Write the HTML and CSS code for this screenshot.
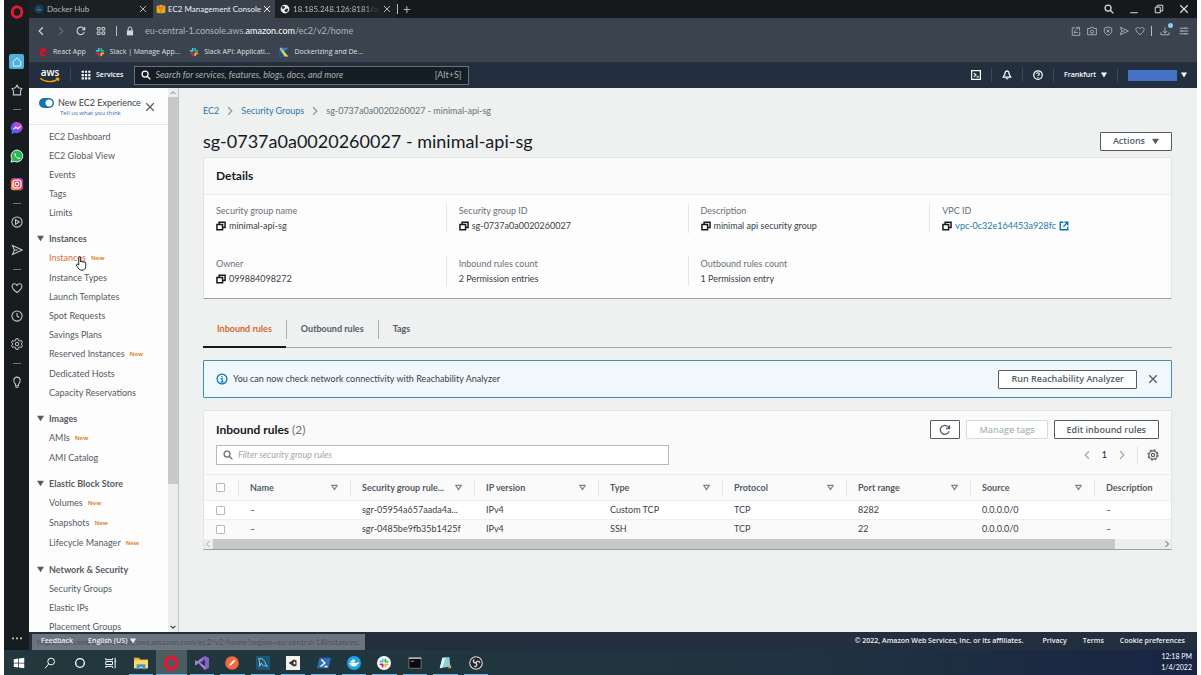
FILE: index.html
```html
<!DOCTYPE html>
<html lang="en">
<head>
<meta charset="utf-8">
<title>EC2 Management Console</title>
<link rel="stylesheet" href="styles.css">
</head>
<body>
<svg class="defs" aria-hidden="true">
  <symbol id="copy" viewBox="0 0 16 16"><path d="M1.500 5.500h9v8.500h-9zM5 5V2h9.500v8.500H11" fill="none" stroke="#16191f" stroke-width="2.400"/></symbol>
  <symbol id="x" viewBox="0 0 16 16"><path d="M2 2l12 12M14 2L2 14" fill="none" stroke="currentColor" stroke-width="2"/></symbol>
  <symbol id="search" viewBox="0 0 16 16"><circle cx="6.500" cy="6.500" r="4.800" fill="none" stroke="currentColor" stroke-width="2"/><path d="M10 10l5 5" stroke="currentColor" stroke-width="2.200"/></symbol>
  <symbol id="down" viewBox="0 0 10 10"><path d="M0 1h10L5 9z" fill="currentColor"/></symbol>
  <symbol id="sort" viewBox="0 0 10 10"><path d="M1.200 2h7.600L5 8z" fill="none" stroke="currentColor" stroke-width="1.700"/></symbol>
  <symbol id="left" viewBox="0 0 10 16"><path d="M8 2L2 8l6 6" fill="none" stroke="currentColor" stroke-width="1.800"/></symbol>
  <symbol id="right" viewBox="0 0 10 16"><path d="M2 2l6 6-6 6" fill="none" stroke="currentColor" stroke-width="1.800"/></symbol>
  <symbol id="heart" viewBox="0 0 16 16"><path d="M8 14C4 11 1.500 8.500 1.500 5.500 1.500 2 6 1 8 4.500 10 1 14.500 2 14.500 5.500 14.500 8.500 12 11 8 14z" fill="none" stroke="currentColor" stroke-width="1.400"/></symbol>
  <symbol id="send" viewBox="0 0 16 16"><path d="M2 2l13 6-13 6 2.500-6zM4.500 8H9" fill="none" stroke="currentColor" stroke-width="1.400"/></symbol>
  <symbol id="reload" viewBox="0 0 16 16"><path d="M13.500 9.500A6 6 0 1 1 12 3.500L14 6M14 1.500V6H9.500" fill="none" stroke="currentColor" stroke-width="1.700"/></symbol>
  <symbol id="opera" viewBox="0 0 16 16"><ellipse cx="8" cy="8" rx="5.500" ry="6" fill="none" stroke="#e31836" stroke-width="3.400"/></symbol>
  <symbol id="slack" viewBox="0 0 16 16"><g stroke-width="2.800" stroke-linecap="round"><path d="M6 2.500V6M2.500 6H6" stroke="#36c5f0"/><path d="M10 2.500V6M10 6h3.500" stroke="#2eb67d"/><path d="M10 10v3.500M10 10h3.500" stroke="#ecb22e"/><path d="M6 10v3.500M2.500 10H6" stroke="#e01e5a"/></g></symbol>
</svg>

<div class="screen">
  <div class="browser">
    <aside class="dock">
      <svg class="ic14 logo"><use href="#opera"/></svg>
      <span class="dock-home"><svg class="ic10" viewBox="0 0 16 16"><path d="M2 7l6-5.500L14 7v7.500H2z" fill="none" stroke="#e4f6ff" stroke-width="1.600"/></svg></span>
      <svg class="ic12" viewBox="0 0 16 16"><path d="M8 1.500l2 3.500 4.500 1-2 3.500.4 5H3.100l.4-5-2-3.500L6 5z" fill="none" stroke="currentColor" stroke-width="1.400"/></svg>
      <i class="dash"></i>
      <svg class="ic14" viewBox="0 0 16 16"><defs><linearGradient id="mg" x1="0" y1="1" x2="1" y2="0"><stop offset="0" stop-color="#1685ff"/><stop offset=".5" stop-color="#8a3cff"/><stop offset="1" stop-color="#ff5f88"/></linearGradient></defs><path d="M8 1a6.800 6.500 0 1 1-3 12.500L2 15V11A6.800 6.500 0 0 1 8 1z" fill="url(#mg)"/><path d="M3.500 9.500L6.500 6l2.300 2 3.500-2-3 3.500L7 8z" fill="#fff" stroke="#fff" stroke-width=".6"/></svg>
      <svg class="ic14" viewBox="0 0 16 16"><path d="M8 1.200a6.800 6.800 0 1 1-3.200 12.900L1.200 15l1-3.600A6.800 6.800 0 0 1 8 1.200z" fill="#25b84c" stroke="#fff" stroke-width="1"/><path d="M5.500 4.500c-1 1-.5 3 1.500 5s4 2.500 5 1.200l-1.600-1.200-1 .8C8.300 10 7 8.800 6.500 7.500l.8-.9z" fill="#fff"/></svg>
      <svg class="ic14" viewBox="0 0 16 16"><defs><linearGradient id="ig" x1="0" y1="1" x2="1" y2="0"><stop offset="0" stop-color="#fdb94a"/><stop offset=".5" stop-color="#e8334f"/><stop offset="1" stop-color="#8a35c8"/></linearGradient></defs><rect x="1" y="1" width="14" height="14" rx="3" fill="url(#ig)"/><rect x="3.500" y="3.500" width="9" height="9" rx="2.500" fill="none" stroke="#fff" stroke-width="1.300"/><circle cx="8" cy="8" r="2.200" fill="none" stroke="#fff" stroke-width="1.300"/></svg>
      <i class="dash"></i>
      <svg class="ic12" viewBox="0 0 16 16"><circle cx="8" cy="8" r="6.800" fill="none" stroke="currentColor" stroke-width="1.400"/><path d="M6 5l5 3-5 3z" fill="none" stroke="currentColor" stroke-width="1.400"/></svg>
      <svg class="ic12"><use href="#send"/></svg>
      <i class="dash"></i>
      <svg class="ic12"><use href="#heart"/></svg>
      <svg class="ic12" viewBox="0 0 16 16"><circle cx="8" cy="8" r="6.800" fill="none" stroke="currentColor" stroke-width="1.400"/><path d="M8 4v4l3 2" fill="none" stroke="currentColor" stroke-width="1.400"/></svg>
      <svg class="ic12" viewBox="0 0 16 16"><g fill="none" stroke="currentColor" stroke-width="1.300"><path d="M6.500 1h3l.4 2.200 2 1 2-.8 1.300 2.600L13.500 8l1.700 2-1.300 2.600-2-.8-2 1-.4 2.200h-3l-.4-2.200-2-1-2 .8L.8 10l1.700-2L.8 6l1.300-2.600 2 .8 2-1z"/><circle cx="8" cy="8" r="2.400"/></g></svg>
      <i class="dash"></i>
      <svg class="ic12" viewBox="0 0 16 16"><path d="M6 11C2 7.500 3.500 1.500 8 1.500S14 7.500 10 11v2H6zM6 15h4" fill="none" stroke="currentColor" stroke-width="1.400"/></svg>
      <svg class="ic10 more" viewBox="0 0 16 16"><path d="M0 7h3v3H0zM6.500 7h3v3h-3zM13 7h3v3h-3z" fill="currentColor"/></svg>
    </aside>

    <div class="window">
      <div class="tabbar">
        <div class="tab"><svg class="ic10" viewBox="0 0 16 16"><circle cx="8" cy="8" r="7.500" fill="#183b50"/><path d="M3 8h10c-1 4-8 5-10 0zM5 5h4v2H5z" fill="#37677f"/></svg><span>Docker Hub</span><svg class="ic8"><use href="#x"/></svg></div>
        <div class="tab tab-on"><svg class="ic10" viewBox="0 0 16 16"><path d="M1 3l7-2 7 2v11l-7 1-7-1z" fill="#f2a51d"/><path d="M5 2v5l3-1 3 1V2M8 7v8" fill="none" stroke="#a86708"/></svg><span>EC2 Management Console</span><svg class="ic8"><use href="#x"/></svg></div>
        <div class="tab"><svg class="ic10" viewBox="0 0 16 16"><circle cx="8" cy="8" r="7" fill="#e9ecee"/><path d="M3 4l4-1 1 3-3 2-2-1zM9 8l4-1-1 5-3 1-2-3z" fill="#252b30"/></svg><span class="fade">18.185.248.126:8181/api/ge</span><svg class="ic8"><use href="#x"/></svg></div>
        <i class="vbar"></i><span class="plus">+</span>
        <div class="winctl">
          <svg class="ic10"><use href="#search"/></svg>
          <svg class="ic10" viewBox="0 0 16 16"><path d="M2 14h12" stroke="currentColor" stroke-width="1.600"/></svg>
          <svg class="ic10" viewBox="0 0 16 16"><path d="M2 5h8v9H2zM5 5V2h9v9h-4" fill="none" stroke="currentColor" stroke-width="1.600"/></svg>
          <svg class="ic10"><use href="#x"/></svg>
        </div>
      </div>
      <div class="address">
        <svg class="ic10 lit"><use href="#left"/></svg>
        <svg class="ic10 off"><use href="#right"/></svg>
        <svg class="ic10 lit"><use href="#reload"/></svg>
        <svg class="ic10 lit" viewBox="0 0 16 16"><path d="M2 2.500h4.500v4H2zM9.500 2.500H14v4H9.500zM2 9.500h4.500v4H2zM9.500 9.500H14v4H9.500z" fill="none" stroke="currentColor" stroke-width="1.500"/></svg>
        <i class="vbar"></i>
        <svg class="ic10 lock" viewBox="0 0 16 16"><path d="M3 7h10v8H3z" fill="currentColor"/><path d="M5 7V4.500a3 3 0 0 1 6 0V7" fill="none" stroke="currentColor" stroke-width="1.600"/></svg>
        <span class="url">eu-central-1.console.aws.<b>amazon.com</b>/ec2/v2/home</span>
        <div class="actions">
          <svg class="ic10" viewBox="0 0 16 16"><path d="M7 3H2v12h12V9M5 12c0-4 2-6 7-9M8 2h5.500v5.500M6 11l5-1" fill="none" stroke="currentColor" stroke-width="1.400"/></svg>
          <svg class="ic10" viewBox="0 0 16 16"><path d="M1 4h4l1-2h4l1 2h4v10H1z" fill="none" stroke="currentColor" stroke-width="1.400"/><circle cx="8" cy="9" r="2.600" fill="none" stroke="currentColor" stroke-width="1.400"/></svg>
          <svg class="ic10" viewBox="0 0 16 16"><path d="M8 1.500l6 2v5c0 3-3 5-6 6-3-1-6-3-6-6v-5zM5.500 5.500l5 5M10.500 5.500l-5 5" fill="none" stroke="currentColor" stroke-width="1.400"/></svg>
          <svg class="ic10"><use href="#send"/></svg>
          <svg class="ic10"><use href="#heart"/></svg>
          <i class="vbar"></i>
          <span class="dl"><svg class="ic10" viewBox="0 0 16 16"><path d="M8 2v9M4.500 8L8 11.500 11.500 8M1.500 10v4h13v-4" fill="none" stroke="currentColor" stroke-width="1.500"/></svg></span>
          <svg class="ic10" viewBox="0 0 16 16"><path d="M1 3.500h14M1 8h14M1 12.500h14M10 2v3M5 6.500v3M10 11v3" stroke="currentColor" stroke-width="1.500"/></svg>
        </div>
      </div>
      <nav class="bookmarks">
        <a href="#"><svg class="ic10" viewBox="0 0 16 16"><path d="M2 8c2-9 13-8 12 0H7c0 4 4 4 7 3-3 6-12 5-12-3z" fill="#d0142c"/></svg>React App</a>
        <a href="#"><svg class="ic10"><use href="#slack"/></svg>Slack | Manage App...</a>
        <a href="#"><svg class="ic10"><use href="#slack"/></svg>Slack API: Applicati...</a>
        <a href="#"><svg class="ic10" viewBox="0 0 16 16"><path d="M1 1h14L8 8l7 7H1z" fill="#2d7fd0"/><path d="M1 1h2l12 14H9z" fill="#f4d53a"/><path d="M1 6l8 9H1z" fill="#16508f"/></svg>Dockerizing and De...</a>
      </nav>

      <header class="aws">
        <svg class="aws-logo" viewBox="0 -6 40 32"><text x="20" y="12" text-anchor="middle" class="aws-word">aws</text><path d="M2 16c10 8 24 8 33 1M30.500 16c5-1 7-1 4.500 5" fill="none" stroke="#f90" stroke-width="2.500"/></svg>
        <i class="hsep"></i>
        <button class="services"><svg class="ic10" viewBox="0 0 16 16"><path d="M1 1h3.500v3.500H1zM6.300 1h3.500v3.500H6.300zM11.600 1h3.500v3.500h-3.500zM1 6.300h3.500v3.500H1zM6.300 6.300h3.500v3.500H6.300zM11.600 6.300h3.500v3.500h-3.500zM1 11.600h3.500v3.500H1zM6.300 11.600h3.500v3.500H6.300zM11.600 11.600h3.500v3.500h-3.500z" fill="#fff"/></svg>Services</button>
        <label class="global-search"><svg class="ic10"><use href="#search"/></svg><input type="text" aria-label="Search AWS" placeholder="Search for services, features, blogs, docs, and more"><span>[Alt+S]</span></label>
        <div class="aws-right">
          <svg class="ic10" viewBox="0 0 16 16"><path d="M1 1h14v14H1zM4.500 5l3.500 3-3.500 3M9 11h3.500" fill="none" stroke="currentColor" stroke-width="1.900"/></svg>
          <i class="hsep"></i>
          <svg class="ic10" viewBox="0 0 16 16"><path d="M8 1.500C5 2 4.500 5 4.500 7L2 11.500h12L11.500 7c0-2-.5-5-3.500-5.500zM6 14h4" fill="none" stroke="currentColor" stroke-width="1.900"/></svg>
          <i class="hsep"></i>
          <svg class="ic10" viewBox="0 0 16 16"><circle cx="8" cy="8" r="6.800" fill="none" stroke="currentColor" stroke-width="2"/><path d="M5.700 6.500c0-3 4.600-3 4.600 0C10.300 8 8 8 8 9.600M8 11v1.700" fill="none" stroke="currentColor" stroke-width="1.700"/></svg>
          <i class="hsep"></i>
          <button class="region">Frankfurt <svg class="ic6"><use href="#down"/></svg></button>
          <i class="hsep"></i>
          <button class="account" aria-label="Account"><i></i><svg class="ic6"><use href="#down"/></svg></button>
        </div>
      </header>

      <div class="console">
        <div class="side">
          <nav class="sidenav">
            <div class="side-head">
              <label class="switch"><input type="checkbox" checked aria-label="New EC2 Experience"><i></i></label>
              <div class="side-title"><span>New EC2 Experience</span><a href="#">Tell us what you think</a></div>
              <button class="bare" aria-label="Close"><svg class="ic10"><use href="#x"/></svg></button>
            </div>
            <div class="links">
              <a href="#">EC2 Dashboard</a><a href="#">EC2 Global View</a><a href="#">Events</a><a href="#">Tags</a><a href="#">Limits</a>
              <h2><svg class="ic7"><use href="#down"/></svg>Instances</h2>
              <a href="#" class="new current">Instances<em>New</em><svg class="hand" viewBox="0 0 16 20"><path d="M5 12V2.500c0-2 2.500-2 2.500 0V8c0-1.500 2.300-1.500 2.300.3 0-1.500 2.300-1.300 2.300.5 0-1.300 2.200-1.200 2.200.5V14c0 3-2 5-5 5-3.500 0-4.500-2-7.500-6.500C1 11 3 10 5 12z" fill="#fff" stroke="#111" stroke-width="1.200"/></svg></a>
              <a href="#">Instance Types</a><a href="#">Launch Templates</a><a href="#">Spot Requests</a><a href="#">Savings Plans</a><a href="#" class="new">Reserved Instances<em>New</em></a><a href="#">Dedicated Hosts</a><a href="#">Capacity Reservations</a>
              <h2><svg class="ic7"><use href="#down"/></svg>Images</h2>
              <a href="#" class="new">AMIs<em>New</em></a><a href="#">AMI Catalog</a>
              <h2><svg class="ic7"><use href="#down"/></svg>Elastic Block Store</h2>
              <a href="#" class="new">Volumes<em>New</em></a><a href="#" class="new">Snapshots<em>New</em></a><a href="#" class="new">Lifecycle Manager<em>New</em></a>
              <h2><svg class="ic7"><use href="#down"/></svg>Network &amp; Security</h2>
              <a href="#">Security Groups</a><a href="#">Elastic IPs</a><a href="#">Placement Groups</a>
            </div>
          </nav>
          <div class="vscroll"><svg class="ic6 faint" viewBox="0 0 10 10"><path d="M1 7l4-4 4 4" fill="none" stroke="currentColor" stroke-width="2"/></svg><i></i><svg class="ic6" viewBox="0 0 10 10"><path d="M1 3l4 4 4-4" fill="none" stroke="currentColor" stroke-width="2"/></svg></div>
        </div>

        <main class="main">
          <nav class="crumbs"><a href="#">EC2</a><svg class="ic10"><use href="#right"/></svg><a href="#">Security Groups</a><svg class="ic10"><use href="#right"/></svg><span>sg-0737a0a0020260027 - minimal-api-sg</span></nav>
          <div class="title"><h1>sg-0737a0a0020260027 - minimal-api-sg</h1><button class="btn btn-menu">Actions <svg class="ic7"><use href="#down"/></svg></button></div>

          <section class="card">
            <h2 class="card-head">Details</h2>
            <dl class="fields">
              <div><dt>Security group name</dt><dd><svg class="ic10"><use href="#copy"/></svg>minimal-api-sg</dd></div>
              <div><dt>Security group ID</dt><dd><svg class="ic10"><use href="#copy"/></svg>sg-0737a0a0020260027</dd></div>
              <div><dt>Description</dt><dd><svg class="ic10"><use href="#copy"/></svg>minimal api security group</dd></div>
              <div><dt>VPC ID</dt><dd><svg class="ic10"><use href="#copy"/></svg><a href="#">vpc-0c32e164453a928fc</a><svg class="ic10 ext" viewBox="0 0 16 16"><path d="M7 2H2v12h12V9M9 2h5v5M14 2L7 9" fill="none" stroke="#0073bb" stroke-width="2.200"/></svg></dd></div>
              <div><dt>Owner</dt><dd><svg class="ic10"><use href="#copy"/></svg>099884098272</dd></div>
              <div><dt>Inbound rules count</dt><dd>2 Permission entries</dd></div>
              <div><dt>Outbound rules count</dt><dd>1 Permission entry</dd></div>
            </dl>
          </section>

          <div class="tabs" role="tablist">
            <button role="tab" aria-selected="true">Inbound rules</button><button role="tab" aria-selected="false">Outbound rules</button><button role="tab" aria-selected="false">Tags</button>
          </div>

          <div class="notice">
            <svg class="ic12" viewBox="0 0 16 16"><circle cx="8" cy="8" r="6.500" fill="none" stroke="#0073bb" stroke-width="1.700"/><path d="M6 7.300h2.200V12M6 12h4.500M7 4.800h1.700" fill="none" stroke="#0073bb" stroke-width="1.600"/></svg>
            <p>You can now check network connectivity with Reachability Analyzer</p>
            <button class="btn">Run Reachability Analyzer</button>
            <button class="bare" aria-label="Dismiss"><svg class="ic10"><use href="#x"/></svg></button>
          </div>

          <section class="card rules">
            <div class="rules-head"><h2>Inbound rules <span>(2)</span></h2>
              <button class="btn btn-icon" aria-label="Refresh"><svg class="ic12"><use href="#reload"/></svg></button>
              <button class="btn" disabled>Manage tags</button>
              <button class="btn">Edit inbound rules</button></div>
            <div class="filter-row">
              <label class="filter"><svg class="ic10"><use href="#search"/></svg><input type="text" aria-label="Filter security group rules" placeholder="Filter security group rules"></label>
              <div class="pager"><button class="bare faint" aria-label="Previous"><svg class="ic10"><use href="#left"/></svg></button><span>1</span><button class="bare faint" aria-label="Next"><svg class="ic10"><use href="#right"/></svg></button><button class="bare gear" aria-label="Preferences"><svg class="ic12" viewBox="0 0 16 16"><circle cx="8" cy="8" r="5.500" fill="none" stroke="currentColor" stroke-width="1.600"/><circle cx="8" cy="8" r="6.800" fill="none" stroke="currentColor" stroke-width="1.500" stroke-dasharray="2.700 2.640"/><circle cx="8" cy="8" r="2.200" fill="none" stroke="currentColor" stroke-width="1.500"/></svg></button></div>
            </div>
            <table>
              <colgroup><col class="c-check"><col class="c-name"><col class="c"><col class="c"><col class="c"><col class="c"><col class="c"><col class="c"><col></colgroup>
              <thead><tr><th><input type="checkbox" aria-label="Select all"></th>
                <th><div>Name<svg class="ic7"><use href="#sort"/></svg></div></th><th><div>Security group rule...<svg class="ic7"><use href="#sort"/></svg></div></th><th><div>IP version<svg class="ic7"><use href="#sort"/></svg></div></th><th><div>Type<svg class="ic7"><use href="#sort"/></svg></div></th><th><div>Protocol<svg class="ic7"><use href="#sort"/></svg></div></th><th><div>Port range<svg class="ic7"><use href="#sort"/></svg></div></th><th><div>Source<svg class="ic7"><use href="#sort"/></svg></div></th><th><div>Description</div></th></tr></thead>
              <tbody>
                <tr><td><input type="checkbox" aria-label="Select rule 1"></td><td>–</td><td>sgr-05954a657aada4a...</td><td>IPv4</td><td>Custom TCP</td><td>TCP</td><td>8282</td><td>0.0.0.0/0</td><td>–</td></tr>
                <tr><td><input type="checkbox" aria-label="Select rule 2"></td><td>–</td><td>sgr-0485be9fb35b1425f</td><td>IPv4</td><td>SSH</td><td>TCP</td><td>22</td><td>0.0.0.0/0</td><td>–</td></tr>
              </tbody>
            </table>
            <div class="hscroll"><svg class="ic8 faint"><use href="#left"/></svg><span><i></i></span><svg class="ic8"><use href="#right"/></svg></div>
          </section>
        </main>
      </div>

      <footer class="foot">
        <a href="#" class="top">Feedback</a><button class="top">English (US) <svg class="ic6"><use href="#down"/></svg></button>
        <div class="legal"><span>© 2022, Amazon Web Services, Inc. or its affiliates.</span><a href="#">Privacy</a><a href="#">Terms</a><a href="#">Cookie preferences</a></div>
        <div class="status">https://eu-central-1.console.aws.amazon.com/ec2/v2/home?region=eu-central-1#Instances:</div>
      </footer>
    </div>
  </div>

  <div class="taskbar">
    <div class="apps">
      <span><svg class="ic12" viewBox="0 0 16 16"><path d="M1 3l6-1v5.500H1zM8 2l7-1v6.500H8zM1 8.500h6V14l-6-1zM8 8.500h7V15l-7-1z" fill="#fff"/></svg></span>
      <span><svg class="ic12" viewBox="0 0 16 16"><circle cx="9.500" cy="6" r="4.500" fill="none" stroke="#fff" stroke-width="1.300"/><path d="M6 9.500L1.500 15" stroke="#fff" stroke-width="1.300"/></svg></span>
      <span><svg class="ic12" viewBox="0 0 16 16"><circle cx="8" cy="8" r="5.800" fill="none" stroke="#fff" stroke-width="1.800"/></svg></span>
      <span><svg class="ic12" viewBox="0 0 16 16"><path d="M1 1.500v2h9v-2M1 14.500v-2h9v2M1 6h9v4H1zM13.500 1v14M13 5.500h2" fill="none" stroke="#fff" stroke-width="1.300"/></svg></span>
      <span class="run"><svg class="ic14" viewBox="0 0 16 16"><path d="M0 2h6l1 2h9v10H0z" fill="#e8b83c"/><path d="M0 5h16v9H0z" fill="#ffda6b"/><path d="M3 15V9.500h10V15h-3v-2.500H6V15z" fill="#3f9ad6"/></svg></span>
      <span class="run active"><svg class="ic16"><use href="#opera"/></svg></span>
      <span class="run"><svg class="ic16" viewBox="0 0 16 16"><path d="M11 1l4 2v10l-4 2-8-8-2 1.500V5.500L3 7z" fill="#8661c5"/><path d="M11 4.500L6.500 8 11 11.500z" fill="#22383d"/><path d="M11 1L3 9.500 1 10.500V5.500L3 6l8 9V11.500L3.500 6z" fill="#a684e4"/></svg></span>
      <span class="run"><svg class="ic14" viewBox="0 0 16 16"><circle cx="8" cy="8" r="7.800" fill="#f2683c"/><path d="M4 12l2-3.500 4.500-4.500 1.700 1.500L7.500 10z" fill="#fff"/></svg></span>
      <span class="run"><svg class="ic14" viewBox="0 0 16 16"><path d="M0 0h16v16H0z" fill="#1b5877"/><path d="M3 3c4-1 7 2 8 6l2 3-3-1c-3 1-3-2-4-3L4 12V6z" fill="none" stroke="#a7c7d3"/></svg></span>
      <span class="run"><svg class="ic14" viewBox="0 0 16 16"><path d="M0 0h16v16H0z" fill="#f3f3ee"/><path d="M3 8l6-4 3 1v6l-3 1z" fill="#333"/><path d="M8 8l2-2 1 2-1 2z" fill="#f3f3ee"/></svg></span>
      <span class="run"><svg class="ic14" viewBox="0 0 16 16"><path d="M3 2h13l-3 12H0z" fill="#2e6cc0"/><path d="M5 4l4 4-5 4M8.500 12H12" fill="none" stroke="#fff" stroke-width="1.500"/></svg></span>
      <span class="run"><svg class="ic14" viewBox="0 0 16 16"><circle cx="8" cy="8" r="8" fill="#1ba6e8"/><path d="M2.500 8h9l1-1.500L14 8c-1 1-1.500 1-2 1-1 4-8 4.500-9.500-1zM4 5.500h5v2H4zM6 4h3v1.500H6z" fill="#fff"/></svg></span>
      <span class="run"><svg class="ic14" viewBox="0 0 16 16"><circle cx="8" cy="8" r="8" fill="#fff"/><use href="#slack" x="2" y="2" width="12" height="12"/></svg></span>
      <span class="run"><svg class="ic14" viewBox="0 0 16 16"><path d="M1 2h14v12H1z" fill="#0a0a0a" stroke="#777d80"/><path d="M1 2.500h14" stroke="#ccc" stroke-width="1.500"/><path d="M3 6h4" stroke="#aaa"/></svg></span>
      <span class="run"><svg class="ic14" viewBox="0 0 16 16"><path d="M5 2l8-1 1 11-12 2z" fill="#8fd0d5"/><path d="M5 2h4L5 13l-3 1z" fill="#d9f2f1"/><path d="M11 14l4-4v4z" fill="#ddb23e"/></svg></span>
      <span class="run"><svg class="ic14" viewBox="0 0 16 16"><circle cx="8" cy="8" r="7.200" fill="#24262b" stroke="#ddd" stroke-width="1.200"/><path d="M8 8c-3 0-4-2-2-4M8 8c1-3 4-2.500 4.500 0M8 8c2 2 .5 4.500-2 4" fill="none" stroke="#ddd" stroke-width="1.500"/></svg></span>
    </div>
    <div class="clock"><span>12:18 PM</span><span>1/4/2022</span></div>
  </div>
</div>
</body>
</html>
```
FILE: styles.css
```css
* { box-sizing: border-box; }
body { margin: 0; background: #fff; font: 9px/12px Lato, "Open Sans", sans-serif; color: #3a4048; }
h1, h2, p, dl, dd { margin: 0; }
a { color: inherit; text-decoration: none; }
button, input { font: inherit; color: inherit; margin: 0; }
button { background: none; border: 0; padding: 0; display: flex; align-items: center; white-space: nowrap; }
svg { flex: none; display: block; }
.defs { position: absolute; width: 0; height: 0; }
.ic6 { width: 6px; height: 6px; }
.ic7 { width: 7px; height: 7px; }
.ic8 { width: 8px; height: 8px; }
.ic10 { width: 10px; height: 10px; }
.ic12 { width: 12px; height: 12px; }
.ic14 { width: 14px; height: 14px; }
.ic16 { width: 16px; height: 16px; }
.bare { color: #545b64; }
.faint { color: #a0a6aa; }

.screen { height: 100vh; margin: 0 4px; display: flex; flex-direction: column; overflow: hidden; }
.browser { flex: 1; min-height: 0; display: flex; }

.dock { width: 25px; background: #171c1f; color: #c6cbcd; display: flex; flex-direction: column; align-items: center; padding-top: 5px; gap: 14px; }
.dock .logo { margin-bottom: 21px; }
.dock-home { width: 15px; height: 15px; border-radius: 2px; background: #4fb0dc; display: grid; place-items: center; }
.dash { width: 8px; height: 1px; margin: -2px 0 -3px; background: #70777a; }
.dock .ic12 { margin: 1px 0; }
.dock .more { margin: auto 0 7px; }

.window { flex: 1; min-width: 0; display: flex; flex-direction: column; }
.tabbar { height: 18px; background: #15191b; color: #b4babe; display: flex; align-items: center; font-size: 8px; }
.tab { width: 122px; height: 18px; display: flex; align-items: center; gap: 3px; padding: 0 6px 0 5px; background: #1b2023; white-space: nowrap; }
.tab span { flex: 1; min-width: 0; overflow: hidden; }
.tab:first-child { width: 124px; }
.tab-on { background: #3a434e; color: #eef0f2; padding: 0 4px 0 3px; gap: 2px; }
.fade { -webkit-mask-image: linear-gradient(90deg, #000 80%, transparent); mask-image: linear-gradient(90deg, #000 80%, transparent); }
.vbar { width: 1px; height: 10px; background: #b7bdc1; }
.plus { margin-left: 5px; font-size: 13px; }
.winctl { margin-left: auto; display: flex; gap: 15px; padding-right: 8px; color: #d8dbdd; }
.address { height: 25px; background: #3a434e; display: flex; align-items: center; gap: 10px; padding: 0 8px 0 7px; color: #aeb6bd; }
.lit, .lock { color: #d2d7db; }
.lock { margin-left: -2px; }
.url { font-size: 9px; white-space: nowrap; }
.off { color: #66707a; }
.url b { font-weight: 400; color: #fff; }
.actions { margin-left: auto; display: flex; align-items: center; gap: 6px; }
.dl { position: relative; padding: 0 3px 0 2px; }
.dl::after { content: ""; position: absolute; right: 0; top: -3px; width: 5px; height: 5px; border-radius: 50%; background: #7ed0ee; }
.bookmarks { height: 19px; background: #3a434e; color: #dde1e4; display: flex; align-items: center; gap: 9px; padding: 0 9px 2px; font-family: "Open Sans", sans-serif; font-size: 7px; }
.bookmarks a { display: flex; align-items: center; gap: 5px; white-space: nowrap; }

.aws { height: 26px; background: #232f3e; color: #fff; display: flex; align-items: center; padding: 0 10px; font-size: 8px; }
.aws-logo { width: 22px; height: 18px; }
.aws-word { font: 600 18px "Open Sans", sans-serif; fill: #fff; }
.hsep { width: 1px; height: 14px; background: #3d4855; }
.aws > .hsep { margin: 0 10px 0 9px; }
.services { gap: 5px; font: 600 7px/12px "Open Sans", sans-serif; }
.global-search { margin-left: 10px; width: 335px; height: 19px; border: 1px solid #687078; background: #161d25; display: flex; align-items: center; gap: 5px; padding: 0 6px; font-size: 9px; }
.global-search input { flex: 1; min-width: 0; border: 0; padding: 0; background: none; outline: 0; }
.global-search input::placeholder { color: #a7b0b7; opacity: 1; font-style: italic; }
.global-search span { color: #a7b0b7; }
.aws-right { margin-left: auto; display: flex; align-items: center; gap: 10px; }
.region { gap: 5px; font: 600 7px/12px "Open Sans", sans-serif; }
.account { gap: 4px; }
.account i { width: 49px; height: 11px; background: #4472c4; }

.console { flex: 1; min-height: 0; display: flex; background: #eff1f1; }
.side { width: 150px; display: flex; background: #fdfdfd; border-right: 1px solid #c4c6c8; overflow: hidden; }
.sidenav { flex: 1; overflow: hidden; }
.side-head { height: 37px; display: flex; align-items: center; gap: 4px; padding: 2px 13px 0 10px; border-bottom: 1px solid #e6e8e8; }
.switch { align-self: flex-start; padding-top: 8px; }
.switch input { position: absolute; opacity: 0; }
.switch i { display: block; width: 15px; height: 10px; border-radius: 5px; background: radial-gradient(circle at 10px 5px, #fff 3px, #1173b5 4px); }
.side-title { display: flex; flex-direction: column; white-space: nowrap; flex: 1; min-width: 0; }
.side-title span { line-height: 11px; }
.side-title a { font-family: "Open Sans", sans-serif; font-size: 6px; line-height: 10px; color: #3867b1; padding-left: 2px; }
.links { padding-top: 2px; color: #545b64; }
.links a { display: flex; align-items: center; height: 19px; padding-left: 20px; white-space: nowrap; }
.links .new { height: 20px; }
.links em { margin-left: 5px; font-family: "Open Sans", sans-serif; font-size: 6px; font-style: normal; font-weight: 700; color: #e08a35; }
.links .current { color: #d5703a; position: relative; }
.hand { position: absolute; left: 46px; top: 8px; width: 12px; height: 15px; }
.links h2 { display: flex; align-items: center; gap: 5px; height: 19px; margin-top: 7px; padding-left: 8px; font-size: 9px; font-weight: 700; }
.vscroll { width: 10px; background: #ededed; display: flex; flex-direction: column; align-items: center; padding: 2px 0; gap: 1px; }
.vscroll i { width: 100%; height: 387px; margin-bottom: auto; background: #c8c8c8; }

.main { flex: 1; min-width: 0; padding: 16px 25px 0 24px; }
.crumbs { display: flex; align-items: center; gap: 6px; height: 13px; color: #687078; }
.crumbs a, .fields a { color: #2577a8; }
.crumbs svg { color: #8b9397; }
.title { display: flex; align-items: center; justify-content: space-between; height: 40px; padding-top: 12px; padding-bottom: 4px; }
h1 { font-size: 18px; line-height: 24px; font-weight: 400; color: #16191f; }
.btn { height: 19px; padding: 0 12px; border: 1px solid #545b64; border-radius: 1px; background: #fff; font-family: "Open Sans", sans-serif; font-weight: 600; color: #545b64; }
.btn:disabled { border-color: #d5dbdb; color: #aab7b8; }
.btn-menu { gap: 7px; }
.btn-icon { padding: 0 8px; }

.card { background: #fdfdfd; border: 1px solid #e2e5e5; border-bottom-color: #9aa3a3; }
.card-head { height: 37px; padding: 0 12px; background: #fafafa; border-bottom: 1px solid #eaeded; font-size: 12px; line-height: 35px; font-weight: 700; color: #16191f; }
.fields { display: grid; grid-template-columns: repeat(4, 1fr); row-gap: 23px; padding: 8px 0 12px; }
.fields > div { height: 30px; padding-left: 12px; border-left: 1px solid #e6e8e8; }
.fields > div:nth-child(4n + 1) { border-left-color: transparent; padding-left: 11px; }
.fields dt { line-height: 15px; color: #687078; }
.fields dd { display: flex; align-items: center; gap: 3px; line-height: 16px; }

.tabs { display: flex; align-items: center; height: 37px; margin-top: 12px; border-bottom: 1px solid #a5adae; }
.tabs button { height: 19px; padding: 0 14px; font-weight: 700; border-right: 1px solid #a5adae; color: #545b64; }
.tabs button:last-child { border: 0; }
.tabs [aria-selected="true"] { position: relative; color: #d9672c; }
.tabs [aria-selected="true"]::after { content: ""; position: absolute; left: 0; right: 0; bottom: -9px; height: 2px; background: #16191f; }

.notice { display: flex; align-items: center; height: 38px; margin-top: 12px; padding: 0 13px 0 12px; border: 1px solid #3f8fb5; border-radius: 1px; background: #f0f8fc; }
.notice p { flex: 1; padding-left: 5px; }
.notice .bare { margin-left: 11px; }

.rules { margin-top: 12px; background: #fafafa; }
.rules-head { display: flex; align-items: center; gap: 6px; padding: 9px 12px 0; }
.rules-head h2 { flex: 1; font-size: 12px; line-height: 16px; font-weight: 700; color: #16191f; }
.rules-head h2 span { font-weight: 400; color: #687078; }
.filter-row { display: flex; align-items: center; justify-content: space-between; padding: 6px 12px 9px; }
.filter { display: flex; align-items: center; gap: 5px; flex: 0 0 48%; height: 20px; padding: 0 6px; border: 1px solid #b4b9ba; background: #fff; color: #687078; }
.filter input { flex: 1; border: 0; padding: 0; background: none; outline: 0; }
.filter input::placeholder { color: #a0a8aa; opacity: 1; font-style: italic; }
.pager { display: flex; align-items: center; gap: 10px; color: #16191f; }
.gear { height: 19px; padding-left: 9px; border-left: 1px solid #e2e5e5; }

table { width: 100%; table-layout: fixed; border-collapse: collapse; }
.c-check { width: 34px; }
.c-name { width: 112px; }
.c { width: 124px; }
th, td { padding: 0 0 0 12px; text-align: left; white-space: nowrap; overflow: hidden; }
thead tr { height: 26px; border-top: 1px solid #eaeded; }
th { font-weight: 700; color: #545b64; }
th div { display: flex; align-items: center; justify-content: space-between; height: 14px; margin-left: -12px; padding: 0 12px 0 11px; border-left: 1px solid #e2e5e5; }
th svg { color: #7d878b; }
tbody tr { height: 19px; }
tbody tr:first-child { background: #fff; }
td { border-top: 1px solid #eef0f0; }
table input { appearance: none; display: block; width: 9px; height: 9px; border: 1px solid #b4babb; border-radius: 1px; background: #fff; }
.hscroll { display: flex; align-items: center; gap: 1px; height: 10px; background: #ededed; }
.hscroll span { flex: 1; height: 100%; }
.hscroll i { display: block; width: 95%; height: 100%; background: #c8c8c8; }

.foot { position: relative; height: 18px; display: flex; align-items: center; gap: 15px; padding: 0 12px; background: #232f3e; color: #eef0f2; font: 600 7px/12px "Open Sans", sans-serif; }
.foot button { gap: 3px; }
.top { position: relative; z-index: 2; }
.legal { margin-left: auto; display: flex; gap: 16px; white-space: nowrap; }
.legal span { margin-right: 3px; }
.status { position: absolute; left: 3px; bottom: 0; height: 16px; padding: 0 5px; line-height: 17px; background: #6c7480; color: #4a525d; font-family: Lato, sans-serif; font-size: 8px; font-weight: 400; white-space: nowrap; }

.taskbar { height: 25px; display: flex; justify-content: space-between; background: linear-gradient(90deg, #22383d, #1f3440 65%, #1a2444); color: #fff; }
.apps { width: 487px; display: grid; grid-template-columns: repeat(16, 1fr); }
.apps span { display: grid; place-items: center; position: relative; }
.apps .run::after { content: ""; position: absolute; left: 3px; right: 3px; bottom: 0; height: 1px; background: #76b9e4; }
.apps .active { background: #4c5d62; }
.apps .active::after { left: 0; right: 0; }
.clock { display: flex; flex-direction: column; align-items: flex-end; padding: 1px 5px 0 0; font-size: 7px; line-height: 11px; }
```
